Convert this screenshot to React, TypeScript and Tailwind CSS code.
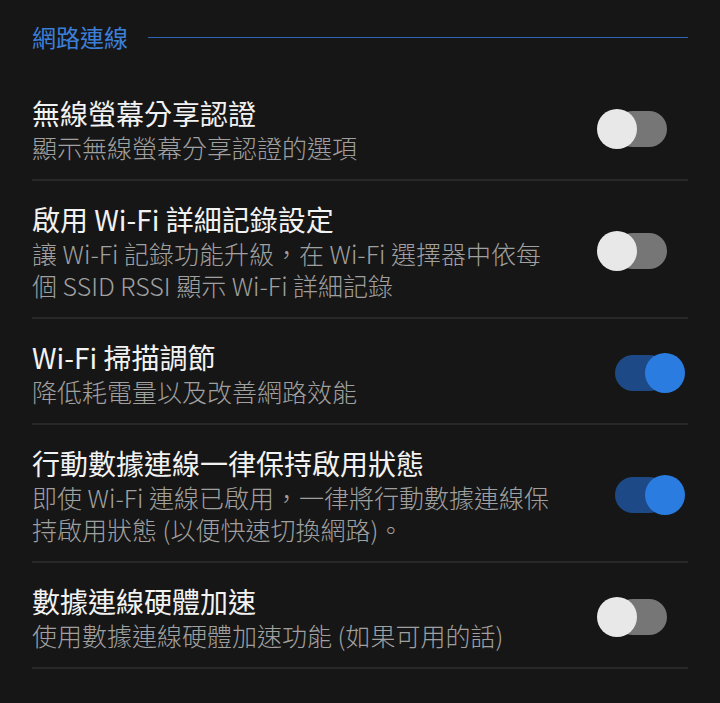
import { ReactNode } from 'react'

interface SettingRowProps {
  title: string
  subtitle: ReactNode
  on?: boolean
}

function Toggle({ on }: { on?: boolean }) {
  return (
    <div className="relative h-[40px] w-[88px] shrink-0">
      <div
        className={`absolute left-[18px] top-[2px] h-[36px] w-[52px] rounded-full ${
          on ? 'bg-[#1d4a86]' : 'bg-[#767676]'
        }`}
      />
      <div
        className={`absolute top-0 h-[40px] w-[40px] rounded-full ${
          on ? 'left-[48px] bg-[#2a7ce0]' : 'left-0 bg-[#e8e8e8]'
        }`}
      />
    </div>
  )
}

function SettingRow({ title, subtitle, on }: SettingRowProps) {
  return (
    <div className="flex items-center border-b-2 border-[#282828] pt-[20px] pb-[16px]">
      <div className="min-w-0 flex-1">
        <div className="text-[length:28px] leading-[36px] text-[#f2f2f2]">{title}</div>
        <div className="text-[length:25px] font-light leading-[32px] text-[#a0a0a0]">
          {subtitle}
        </div>
      </div>
      <div className="ml-4 mr-[3px]">
        <Toggle on={on} />
      </div>
    </div>
  )
}

export default function App() {
  return (
    <div
      className="h-screen overflow-hidden bg-[#161616] px-8"
      style={{ fontFamily: '"Noto Sans CJK TC", "Noto Sans", sans-serif' }}
    >
      <div className="flex h-[75px] items-start pt-[20px]">
        <span className="text-[length:24px] leading-[34px] text-[#3c7fd8]">網路連線</span>
        <div className="ml-5 mt-[17px] h-px flex-1 bg-[#2f66b4]" />
      </div>

      <SettingRow title="無線螢幕分享認證" subtitle="顯示無線螢幕分享認證的選項" />
      <SettingRow
        title="啟用 Wi-Fi 詳細記錄設定"
        subtitle={
          <>
            讓 Wi-Fi 記錄功能升級，在 Wi-Fi 選擇器中依每
            <br />
            個 SSID RSSI 顯示 Wi-Fi 詳細記錄
          </>
        }
      />
      <SettingRow title="Wi-Fi 掃描調節" subtitle="降低耗電量以及改善網路效能" on />
      <SettingRow
        title="行動數據連線一律保持啟用狀態"
        subtitle={
          <>
            即使 Wi-Fi 連線已啟用，一律將行動數據連線保
            <br />
            持啟用狀態 (以便快速切換網路)。
          </>
        }
        on
      />
      <SettingRow title="數據連線硬體加速" subtitle="使用數據連線硬體加速功能 (如果可用的話)" />
      <div className="pt-[30px]">
        <div className="text-[length:28px] leading-[36px] text-[#f2f2f2]">預設 USB 設定</div>
      </div>
    </div>
  )
}
